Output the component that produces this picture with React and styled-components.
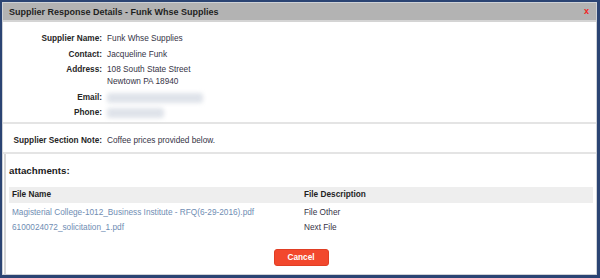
import React from "react";
import styled, { createGlobalStyle } from "styled-components";

const Global = createGlobalStyle`
  html, body { margin: 0; padding: 0; }
  body {
    background: #2b4473;
    font-family: "Liberation Sans", Arial, sans-serif;
    width: 600px;
    height: 278px;
    overflow: hidden;
  }
  #root { height: 278px; }
`;

const Frame = styled.div`
  box-sizing: border-box;
  height: 278px;
  padding: 2px 3px 3px 2px;
`;

const Dialog = styled.div`
  box-sizing: border-box;
  height: 100%;
  background: #ffffff;
  border: 1px solid #cfd2d6;
  display: flex;
  flex-direction: column;
`;

const Header = styled.div`
  height: 17px;
  flex-shrink: 0;
  background: #b3b3b3;
  border-bottom: 2px solid #d4d4d4;
  display: flex;
  align-items: center;
  justify-content: space-between;
  padding: 0 7px 0 6px;
`;

const Title = styled.div`
  font-size: 9px;
  font-weight: bold;
  color: #1f1f1f;
`;

const Close = styled.span`
  font-size: 9px;
  font-weight: bold;
  color: #f21f1f;
  line-height: 9px;
  cursor: pointer;
`;

const InfoGrid = styled.div`
  display: grid;
  grid-template-columns: 99px 1fr;
  column-gap: 5px;
  row-gap: 3.5px;
  padding: ${(p) => p.$pad};
  font-size: 8.25px;
  line-height: 12px;
  flex-shrink: 0;
`;

const Label = styled.div`
  text-align: right;
  font-weight: bold;
  color: #262626;
  white-space: nowrap;
  height: ${(p) => (p.$tall ? 24 : 12)}px;
`;

const Value = styled.div`
  color: #363446;
  height: ${(p) => (p.$tall ? 24 : 12)}px;
  display: flex;
  flex-direction: column;
`;

const Blurred = styled.div`
  height: 10px;
  margin-top: 1px;
  width: ${(p) => p.$w}px;
  background: #dfe3ea;
  filter: blur(2px);
  border-radius: 3px;
`;

const Separator = styled.div`
  height: 2px;
  flex-shrink: 0;
  background: #e4e4e4;
`;

const Attachments = styled.div`
  flex: 1;
  margin-left: 1px;
  border-left: 2px solid #d6d6d6;
  padding: 11px 3px 0 3px;
  display: flex;
  flex-direction: column;
`;

const SectionTitle = styled.div`
  font-size: 9.75px;
  line-height: 12px;
  font-weight: bold;
  color: #1a1a1a;
`;

const Table = styled.div`
  margin-top: 10px;
  display: flex;
  flex-direction: column;
`;

const Row = styled.div`
  display: grid;
  grid-template-columns: 1fr 1fr;
  height: ${(p) => (p.$head ? 16 : 15)}px;
  align-items: center;
  background: ${(p) => (p.$head ? "#eeeeee" : "transparent")};
  margin-top: ${(p) => (p.$first ? 2 : 0)}px;
  font-size: 8.25px;
`;

const Cell = styled.div`
  padding-left: 3px;
  font-weight: ${(p) => (p.$head ? "bold" : "normal")};
  color: ${(p) => (p.$head ? "#1f1f1f" : "#363446")};
  white-space: nowrap;
`;

const Link = styled.a`
  color: #6f8db3;
  text-decoration: none;
  cursor: pointer;
`;

const Footer = styled.div`
  display: flex;
  justify-content: center;
  margin-top: 14px;
`;

const CancelButton = styled.button`
  width: 55px;
  height: 17px;
  border: 1px solid #e03e24;
  border-radius: 3px;
  background: #f2482d;
  color: #ffffff;
  font-family: "Liberation Sans", Arial, sans-serif;
  font-size: 8.25px;
  font-weight: bold;
  padding: 0;
  cursor: pointer;
`;

const files = [
  { name: "Magisterial College-1012_Business Institute - RFQ(6-29-2016).pdf", desc: "File Other" },
  { name: "6100024072_solicitation_1.pdf", desc: "Next File" },
];

export default function App() {
  return (
    <>
      <Global />
      <Frame>
        <Dialog>
          <Header>
            <Title>Supplier Response Details - Funk Whse Supplies</Title>
            <Close>x</Close>
          </Header>
          <InfoGrid $pad="11px 0 2.5px 0">
            <Label>Supplier Name:</Label>
            <Value>Funk Whse Supplies</Value>
            <Label>Contact:</Label>
            <Value>Jacqueline Funk</Value>
            <Label $tall>Address:</Label>
            <Value $tall>
              <span>108 South State Street</span>
              <span>Newtown PA 18940</span>
            </Value>
            <Label>Email:</Label>
            <Value>
              <Blurred $w={96} />
            </Value>
            <Label>Phone:</Label>
            <Value>
              <Blurred $w={57} />
            </Value>
          </InfoGrid>
          <Separator />
          <InfoGrid $pad="11px 0 5px 0">
            <Label>Supplier Section Note:</Label>
            <Value>Coffee prices provided below.</Value>
          </InfoGrid>
          <Separator />
          <Attachments>
            <SectionTitle>attachments:</SectionTitle>
            <Table>
              <Row $head>
                <Cell $head>File Name</Cell>
                <Cell $head>File Description</Cell>
              </Row>
              {files.map((f, i) => (
                <Row key={f.name} $first={i === 0}>
                  <Cell>
                    <Link>{f.name}</Link>
                  </Cell>
                  <Cell>{f.desc}</Cell>
                </Row>
              ))}
            </Table>
            <Footer>
              <CancelButton>Cancel</CancelButton>
            </Footer>
          </Attachments>
        </Dialog>
      </Frame>
    </>
  );
}
